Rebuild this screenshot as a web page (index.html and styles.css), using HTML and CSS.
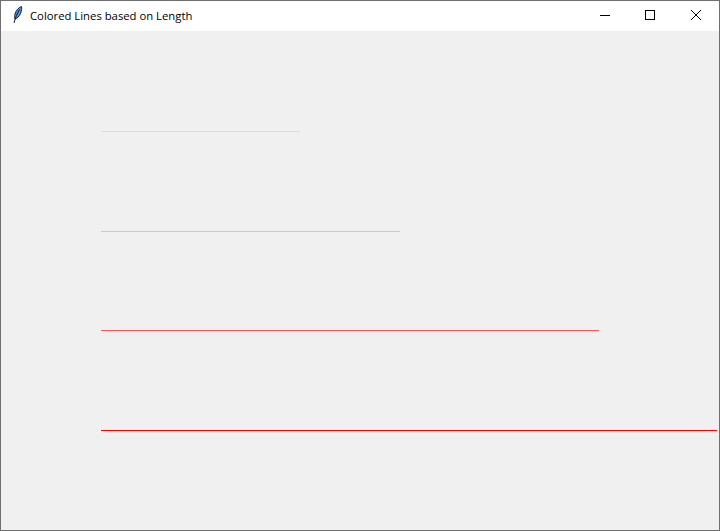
FILE: index.html
```html
<!DOCTYPE html>
<html lang="en">
<head>
  <meta charset="UTF-8" />
  <title>Colored Lines based on Length</title>
  <link rel="stylesheet" href="styles.css">
</head>
<body>

  <div class="window">
    <!-- Title bar -->
    <div class="titlebar">
      <svg class="app-icon" width="16" height="20" viewBox="0 0 16 20">
        <path d="M12.5 1.5 C9.5 2.5 7 5.5 6 9 C5.5 11 5.5 12.5 6 14 C8 13.5 10.5 11.5 11.5 8.5 C12.5 6 13 3.5 12.5 1.5 Z" fill="#4f93e6" stroke="#12233f" stroke-width="1"/>
        <path d="M10.5 4.5 C8.5 8 6.5 12 5 18" fill="none" stroke="#0d1a33" stroke-width="1"/>
      </svg>
      <span class="title">Colored Lines based on Length</span>
      <div class="controls">
        <svg class="control" width="46" height="30" viewBox="0 0 46 30">
          <path d="M19 14.5 H29" stroke="#000" stroke-width="1"/>
        </svg>
        <svg class="control" width="46" height="30" viewBox="0 0 46 30">
          <rect x="18.5" y="9.5" width="9" height="9" fill="none" stroke="#000" stroke-width="1"/>
        </svg>
        <svg class="control" width="46" height="30" viewBox="0 0 46 30">
          <path d="M18 9 L28 19 M28 9 L18 19" stroke="#000" stroke-width="1" fill="none"/>
        </svg>
      </div>
    </div>

    <!-- Canvas -->
    <svg class="canvas" width="718" height="499" viewBox="0 0 718 499" shape-rendering="crispEdges">
      <line class="line-1" x1="100" y1="100.5" x2="299" y2="100.5"/>
      <line class="line-2" x1="100" y1="200.5" x2="399" y2="200.5"/>
      <line class="line-3" x1="100" y1="299.5" x2="598" y2="299.5"/>
      <line class="line-4" x1="100" y1="399.5" x2="716" y2="399.5"/>
    </svg>
  </div>

</body>
</html>
```

FILE: styles.css
```css
html, body {
  margin: 0;
  padding: 0;
  width: 100%;
  height: 100%;
  overflow: hidden;
}

.window {
  box-sizing: border-box;
  display: flex;
  flex-direction: column;
  width: 720px;
  height: 531px;
  border: 1px solid #6f6f6f;
  background-color: #f0f0f0;
}

.titlebar {
  display: flex;
  align-items: center;
  flex: none;
  height: 30px;
  padding-left: 8px;
  background-color: #fff;
}

.app-icon {
  flex: none;
  margin-top: -2px;
}

.title {
  margin-left: 5px;
  margin-top: -2px;
  font-family: "Open Sans", sans-serif;
  font-size: 11.3px;
  color: #000;
}

.controls {
  display: flex;
  margin-left: auto;
}

.control {
  display: block;
}

.canvas {
  display: block;
  flex: none;
}

.line-1 { stroke: #ffcccc; }
.line-2 { stroke: #ffb3b3; }
.line-3 { stroke: #ff5555; }
.line-4 { stroke: #ff0000; }
```
